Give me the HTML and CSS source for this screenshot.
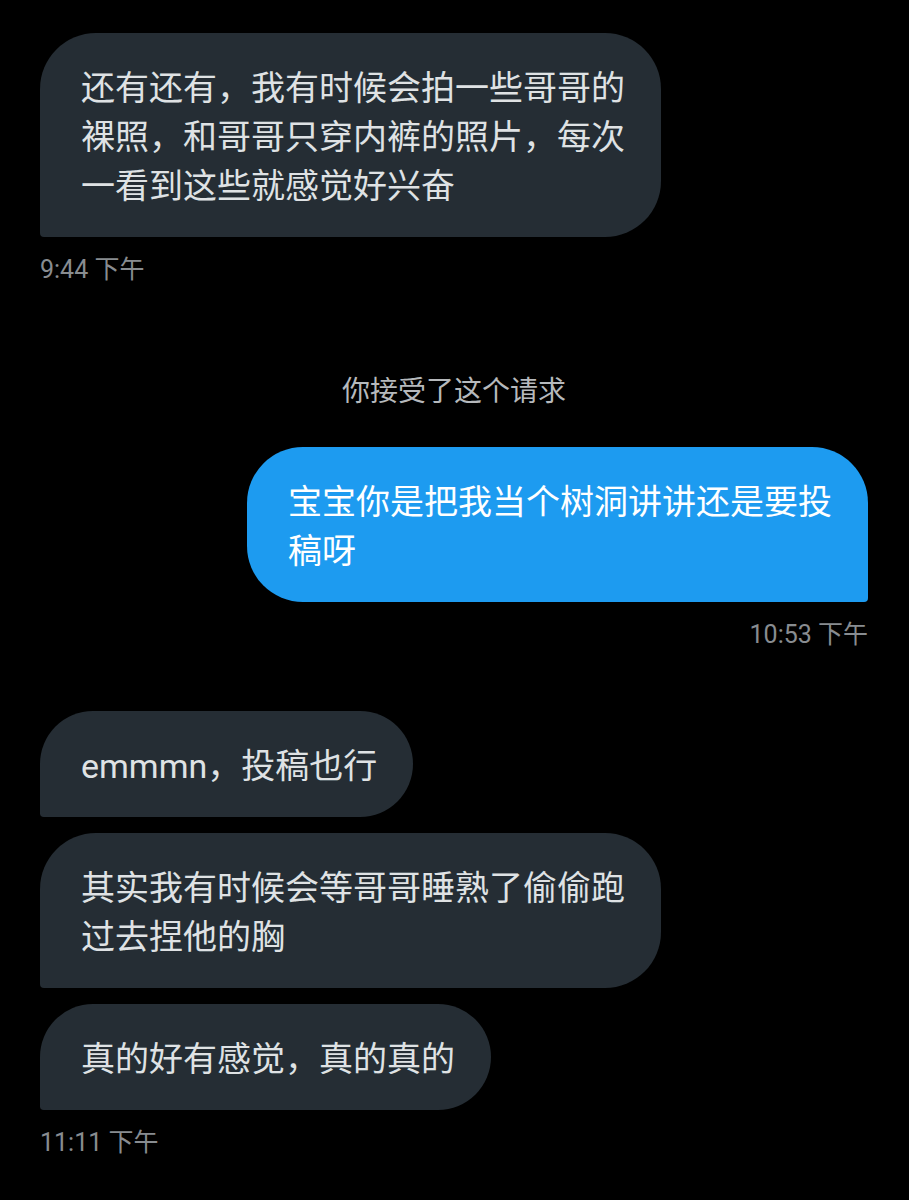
FILE: index.html
```html
<!DOCTYPE html>
<html lang="zh-CN">
<head>
  <meta charset="UTF-8">
  <meta name="viewport" content="width=device-width, initial-scale=1.0">
  <title>私信</title>
  <link rel="stylesheet" href="styles.css">
</head>
<body>
  <div class="thread">
    <div class="group received">
      <div class="bubble">还有还有，我有时候会拍一些哥哥的裸照，和哥哥只穿内裤的照片，每次一看到这些就感觉好兴奋</div>
      <div class="time">9:44 下午</div>
    </div>

    <div class="notice">你接受了这个请求</div>

    <div class="group sent">
      <div class="bubble">宝宝你是把我当个树洞讲讲还是要投稿呀</div>
      <div class="time">10:53 下午</div>
    </div>

    <div class="group received later">
      <div class="bubble">emmmn，投稿也行</div>
      <div class="bubble">其实我有时候会等哥哥睡熟了偷偷跑过去捏他的胸</div>
      <div class="bubble">真的好有感觉，真的真的</div>
      <div class="time">11:11 下午</div>
    </div>
  </div>
</body>
</html>
```

FILE: styles.css
```css
body {
  margin: 0;
  padding: 0;
  background-color: #000;
  color: #e3e6e8;
  font-family: Roboto, "Noto Sans CJK SC", sans-serif;
}
.thread {
  display: flex;
  flex-direction: column;
  padding: 33px 41px 0 40px;
}
.group {
  display: flex;
  flex-direction: column;
  gap: 16px;
}
.received {
  align-items: flex-start;
}
.sent {
  align-items: flex-end;
}
.later {
  margin-top: 61px;
}
.bubble {
  box-sizing: border-box;
  max-width: 621px;
  padding: 31px 36px 26px 41px;
  font-size: 34px;
  line-height: 49px;
  border-radius: 56px 56px 56px 4px;
  background-color: #252d34;
  color: #dfe2e4;
}
.sent .bubble {
  background-color: #1d9bf0;
  color: #fff;
  border-radius: 56px 56px 4px 56px;
}
.time {
  margin-top: 2px;
  font-size: 25px;
  line-height: 30px;
  color: #888c90;
}
.notice {
  margin: 89px 0 37px;
  text-align: center;
  font-size: 28px;
  line-height: 36px;
  color: #b6b9bc;
}
```
